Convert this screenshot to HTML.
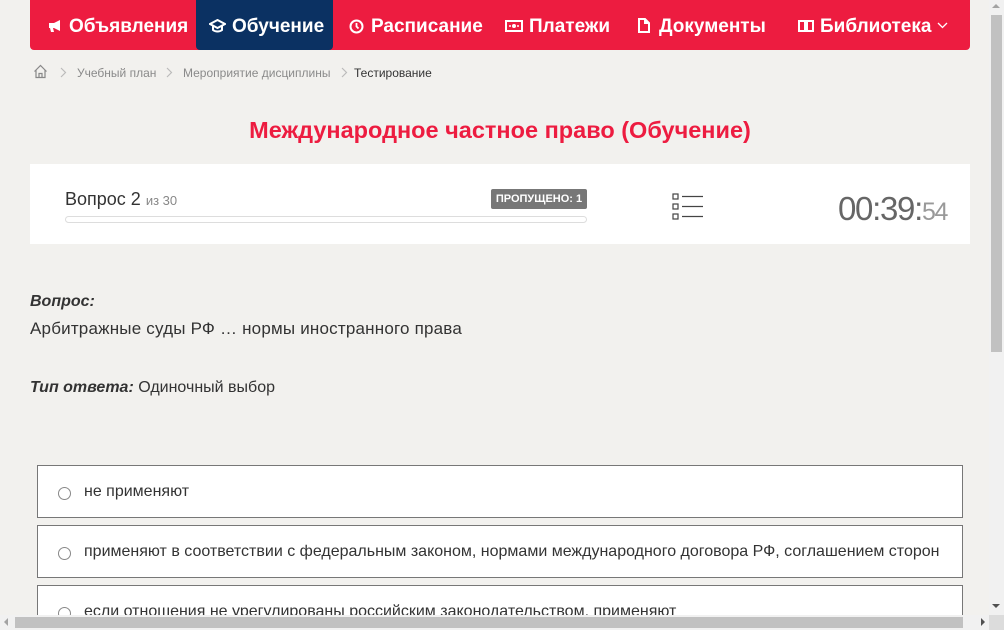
<!DOCTYPE html>
<html><head><meta charset="utf-8"><style>
*{box-sizing:border-box;margin:0;padding:0}
html,body{width:1004px;height:630px;overflow:hidden;background:#f2f1ee;font-family:"Liberation Sans",sans-serif;position:relative}
.a{position:absolute}
.nav{left:30px;top:0;width:940px;height:50px;background:#ed1c40;border-radius:0 0 4px 4px}
.nt{position:absolute;top:2px;height:50px;line-height:50px;color:#fff;font-size:19px;font-weight:bold;white-space:nowrap}
.ic{position:absolute;top:18px}
.act{position:absolute;left:166px;top:0;width:137px;height:50px;background:#0b3162;border-radius:0 0 4px 4px}
.bc{top:66px;font-size:12px;color:#8a8a8a}
h1{position:absolute;left:0;width:1000px;top:117px;text-align:center;color:#ed1c40;font-size:23.5px;font-weight:bold}
.card{left:30px;top:164px;width:940px;height:80px;background:#fff}
.opt{left:37px;width:926px;height:53px;background:#fff;border:1px solid #777}
.opt .r{position:absolute;left:20px;top:21px;width:13px;height:13px;border:1px solid #888;border-radius:50%}
.opt .t{position:absolute;left:46px;top:17px;font-size:16px;color:#333}
</style></head><body>
<div class="a nav">
 <div class="act"></div>
 <svg class="ic" style="left:18px;top:19px" width="14" height="14" viewBox="0 0 14 14"><path d="M1 4h5l6-3v11l-6-3H5l1 4H3l-1-4H1z" fill="#fff"/></svg>
 <div class="nt" style="left:39px">Объявления</div>
 <svg class="ic" style="left:179px;top:19px" width="17" height="14" viewBox="0 0 17 14"><path d="M8.5 1L1 5l7.5 4 7.5-4z M4 7v4c2.5 2 6.5 2 9 0V7" fill="none" stroke="#fff" stroke-width="2"/></svg>
 <div class="nt" style="left:202px">Обучение</div>
 <svg class="ic" style="left:319px;top:19px" width="15" height="15" viewBox="0 0 15 15"><circle cx="7.5" cy="7.5" r="6" fill="none" stroke="#fff" stroke-width="2"/><path d="M7.5 4v3.5l2 2" stroke="#fff" stroke-width="1.8" fill="none"/></svg>
 <div class="nt" style="left:341px">Расписание</div>
 <svg class="ic" style="left:475px;top:20px" width="18" height="12" viewBox="0 0 18 12"><rect x="1" y="1" width="16" height="10" fill="none" stroke="#fff" stroke-width="2"/><circle cx="9" cy="6" r="2" fill="#fff"/><circle cx="5" cy="6" r="1" fill="#fff"/><circle cx="13" cy="6" r="1" fill="#fff"/></svg>
 <div class="nt" style="left:499px">Платежи</div>
 <svg class="ic" style="left:608px;top:18px" width="12" height="15" viewBox="0 0 12 15"><path d="M1 1h6l4 4v9H1z" fill="none" stroke="#fff" stroke-width="2"/><path d="M6 1v5h5" fill="#fff"/></svg>
 <div class="nt" style="left:629px">Документы</div>
 <svg class="ic" style="left:768px;top:19px" width="16" height="14" viewBox="0 0 16 14"><path d="M1 2h6v10H1zM9 2h6v10H9zM8 2v11" fill="none" stroke="#fff" stroke-width="2"/></svg>
 <div class="nt" style="left:790px">Библиотека</div>
 <svg class="ic" style="left:907px;top:22px" width="11" height="7" viewBox="0 0 11 7"><path d="M1 1l4.5 4.5L10 1" fill="none" stroke="#fff" stroke-width="1.3"/></svg>
</div>
<svg class="a" style="left:33px;top:64px" width="15" height="15" viewBox="0 0 15 15"><path d="M1.5 7.5L7.5 1.5l6 6M3 6v7.5h9V6M6 13.5v-4h3v4" fill="none" stroke="#888" stroke-width="1.2"/></svg>
<svg class="a" style="left:60px;top:67px" width="7" height="11" viewBox="0 0 7 11"><path d="M1 1l4.5 4.5L1 10" fill="none" stroke="#bbb" stroke-width="1.2"/></svg>
<span class="a bc" style="left:77px">Учебный план</span>
<svg class="a" style="left:166px;top:67px" width="7" height="11" viewBox="0 0 7 11"><path d="M1 1l4.5 4.5L1 10" fill="none" stroke="#bbb" stroke-width="1.2"/></svg>
<span class="a bc" style="left:183px">Мероприятие дисциплины</span>
<svg class="a" style="left:341px;top:67px" width="7" height="11" viewBox="0 0 7 11"><path d="M1 1l4.5 4.5L1 10" fill="none" stroke="#bbb" stroke-width="1.2"/></svg>
<span class="a bc" style="left:354px;color:#333">Тестирование</span>
<h1>Международное частное право (Обучение)</h1>
<div class="a card">
 <div class="a" style="left:35px;top:25px;font-size:18px;color:#333">Вопрос 2 <span style="font-size:13px;color:#888">из 30</span></div>
 <div class="a" style="left:461px;top:25px;width:96px;height:20px;background:#777;color:#fff;font-size:11px;font-weight:bold;line-height:20px;text-align:center;border-radius:2px">ПРОПУЩЕНО: 1</div>
 <div class="a" style="left:35px;top:52px;width:522px;height:7px;border:1px solid #ddd;border-radius:4px"></div>
 <svg class="a" style="left:642px;top:29px" width="32" height="28" viewBox="0 0 32 28"><g fill="none" stroke="#444" stroke-width="1.2"><rect x="1" y="1" width="5" height="5"/><rect x="1" y="11" width="5" height="5"/><rect x="1" y="21" width="5" height="5"/><path d="M10 3.5h21M10 13.5h21M10 23.5h21"/></g></svg>
 <div class="a" style="left:808px;top:26px;font-size:33px;color:#666;letter-spacing:-1.3px">00:39:<span style="font-size:25px;color:#999">54</span></div>
</div>
<div class="a" style="left:30px;top:293px;font-size:16px;font-weight:bold;font-style:italic;color:#333">Вопрос:</div>
<div class="a" style="left:30px;top:319px;font-size:17px;color:#333;letter-spacing:0.2px">Арбитражные суды РФ … нормы иностранного права</div>
<div class="a" style="left:30px;top:379px;font-size:16px;color:#333"><b><i>Тип ответа:</i></b> Одиночный выбор</div>
<div class="a opt" style="top:465px"><div class="r"></div><div class="t">не применяют</div></div>
<div class="a opt" style="top:525px"><div class="r"></div><div class="t">применяют в соответствии с федеральным законом, нормами международного договора РФ, соглашением сторон</div></div>
<div class="a opt" style="top:585px;height:60px"><div class="r"></div><div class="t">если отношения не урегулированы российским законодательством, применяют</div></div>
<div class="a" style="left:989px;top:0;width:15px;height:630px;background:#f1f1f1"></div>
<div class="a" style="left:991px;top:15px;width:11px;height:337px;background:#c1c1c1"></div>
<div class="a" style="left:992px;top:4px;width:0;height:0;border:4px solid transparent;border-bottom-color:#a3a3a3;border-top:0"></div>
<div class="a" style="left:992px;top:604px;width:0;height:0;border:4px solid transparent;border-top-color:#505050;border-bottom:0"></div>
<div class="a" style="left:0;top:615px;width:989px;height:15px;background:#f1f1f1"></div>
<div class="a" style="left:15px;top:617px;width:948px;height:11px;background:#c1c1c1"></div>
<div class="a" style="left:4px;top:618px;width:0;height:0;border:4px solid transparent;border-right-color:#a3a3a3;border-left:0"></div>
<div class="a" style="left:981px;top:618px;width:0;height:0;border:4px solid transparent;border-left-color:#505050;border-right:0"></div>
<div class="a" style="left:989px;top:615px;width:15px;height:15px;background:#dcdcdc"></div>
</body></html>
